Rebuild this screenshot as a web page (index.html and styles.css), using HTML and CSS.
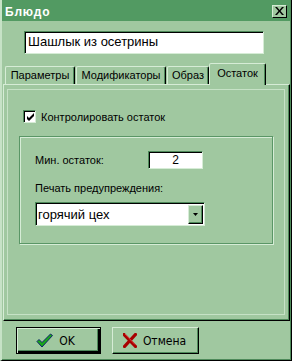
FILE: index.html
```html
<!DOCTYPE html>
<html lang="ru">
<head>
  <meta charset="UTF-8">
  <title>Блюдо</title>
  <link rel="stylesheet" href="styles.css">
</head>
<body>
  <div class="window">
    <div class="titlebar">
      <span class="title">Блюдо</span>
      <span class="close">
        <svg width="9" height="8" viewBox="0 0 9 8"><path d="M0 0h2l2.5 3 2.5-3h2l-3.5 4 3.5 4h-2l-2.5-3-2.5 3h-2l3.5-4z" fill="#000"/></svg>
      </span>
    </div>

    <div class="content">
      <div class="name-field">Шашлык из осетрины</div>

      <div class="tabs">
        <div class="tab tab-params">Параметры</div>
        <div class="tab tab-mods">Модификаторы</div>
        <div class="tab tab-image">Образ</div>
        <div class="tab tab-stock active">Остаток</div>
      </div>

      <div class="panel">
        <div class="page">
          <div class="check-row">
            <span class="checkbox">
              <svg width="9" height="9" viewBox="0 0 9 9"><path d="M1 3v3l2 2 5-5V0L3 5z" fill="#000"/></svg>
            </span>
            <span>Контролировать остаток</span>
          </div>

          <div class="group">
            <div class="field-row">
              <span class="field-label">Мин. остаток:</span>
              <span class="num-field">2</span>
            </div>
            <div class="field-label warn-label">Печать предупреждения:</div>
            <div class="combo">
              <span class="combo-text">горячий цех</span>
              <span class="combo-btn">
                <svg width="5" height="3" viewBox="0 0 5 3"><path d="M0 0h5L2.5 3z" fill="#000"/></svg>
              </span>
            </div>
          </div>
        </div>
      </div>

      <div class="buttons">
        <div class="btn btn-default">
          <svg width="17" height="15" viewBox="0 0 17 15"><path d="M1 8.5l2-2 3 3L14.5 1l2 1.5L6 14z" fill="#18a818" stroke="#102070" stroke-width="1" stroke-linejoin="round"/></svg>
          <span>OK</span>
        </div>
        <div class="btn btn-cancel">
          <svg width="14" height="15" viewBox="0 0 14 15"><path d="M1 1.5L12.5 13.5M12.5 1.5L1.5 13.5" stroke="#a80000" stroke-width="3.2" stroke-linecap="square"/><path d="M2 1L12 11.5" stroke="#e04040" stroke-width="1"/></svg>
          <span>Отмена</span>
        </div>
      </div>
    </div>
  </div>
</body>
</html>
```

FILE: styles.css
```css
body {
  margin: 0;
  font-family: 'Liberation Sans', Arial, sans-serif;
  font-size: 11px;
  color: #000;
  background: #a0c8a0;
}

/* Window frame */
.window {
  width: 292px;
  height: 361px;
  box-sizing: border-box;
  background: #a0c8a0;
  border-left: 2px solid #c6e2c6;
  border-right: 1px solid #000;
  border-bottom: 1px solid #000;
  box-shadow: inset -1px -1px 0 #4e8a5a;
}
.titlebar {
  height: 21px;
  margin-right: 1px;
  background: #529a62;
  display: flex;
  align-items: center;
  justify-content: space-between;
  padding: 0 3px 0 3px;
}
.title {
  color: #fff;
  font-weight: 700;
  font-size: 12px;
  letter-spacing: 0.8px;
  padding-top: 2px;
}
.close {
  width: 15px;
  height: 13px;
  box-sizing: border-box;
  background: #a0c8a0;
  border: 1px solid;
  border-color: #d6ecd6 #000 #000 #d6ecd6;
  display: flex;
  align-items: center;
  justify-content: center;
  margin-top: 1px;
}

.content {
  padding: 10px 0 0 1px;
}

/* Name edit */
.name-field {
  margin-left: 21px;
  width: 240px;
  height: 23px;
  box-sizing: border-box;
  background: #fff;
  border: 1px solid;
  border-color: #4e8a5a #d6ecd6 #d6ecd6 #4e8a5a;
  box-shadow: inset 1px 1px 0 #000;
  font-size: 13px;
  line-height: 20px;
  padding-left: 3px;
}

/* Tabs */
.tabs {
  display: flex;
  align-items: flex-end;
  height: 21px;
  margin-top: 9px;
  position: relative;
  z-index: 1;
}
.tab {
  height: 18px;
  box-sizing: border-box;
  border: 1px solid;
  border-bottom: none;
  border-color: #d6ecd6 #000 transparent #d6ecd6;
  box-shadow: inset -1px 0 0 #4e8a5a;
  border-radius: 2px 2px 0 0;
  text-align: center;
  line-height: 17px;
  white-space: nowrap;
}
.tab-params { margin-left: 2px; width: 70px; }
.tab-mods { margin-left: 1px; width: 90px; }
.tab-image { margin-left: 1px; width: 42px; }
.tab-stock { width: 57px; }
.tab.active {
  height: 22px;
  margin-bottom: -1px;
  background: #a0c8a0;
  line-height: 18px;
}

/* Tab panel */
.panel {
  width: 287px;
  height: 237px;
  box-sizing: border-box;
  border: 1px solid;
  border-color: #d6ecd6 #000 #000 #d6ecd6;
  box-shadow: inset -1px -1px 0 #4e8a5a;
  padding: 4px 0 0 3px;
}
.page {
  width: 278px;
  height: 226px;
  box-sizing: border-box;
  border: 1px solid #c6e2c6;
  padding: 20px 0 0 15px;
}

.check-row {
  display: flex;
  align-items: center;
  gap: 5px;
  height: 13px;
}
.checkbox {
  width: 13px;
  height: 13px;
  box-sizing: border-box;
  background: #fff;
  border: 1px solid;
  border-color: #4e8a5a #d6ecd6 #d6ecd6 #4e8a5a;
  box-shadow: inset 1px 1px 0 #000;
  display: flex;
  align-items: center;
  justify-content: center;
  padding: 1px 0 0 1px;
}

/* Group box */
.group {
  margin: 13px 0 0 -4px;
  width: 254px;
  box-sizing: border-box;
  border: 1px solid #5a9666;
  box-shadow: inset 1px 1px 0 #d6ecd6, 1px 1px 0 #d6ecd6;
  padding: 14px 0 17px 15px;
}
.field-row {
  display: flex;
  align-items: center;
  height: 18px;
}
.field-label { width: 113px; }
.num-field {
  width: 55px;
  height: 18px;
  box-sizing: border-box;
  background: #fff;
  border: 1px solid;
  border-color: #4e8a5a #d6ecd6 #d6ecd6 #4e8a5a;
  box-shadow: inset 1px 1px 0 #000;
  text-align: center;
  line-height: 16px;
  font-size: 12px;
}
.warn-label {
  width: auto;
  margin-top: 13px;
  line-height: 13px;
}
.combo {
  margin-top: 7px;
  width: 170px;
  height: 24px;
  box-sizing: border-box;
  background: #fff;
  border: 1px solid;
  border-color: #4e8a5a #d6ecd6 #d6ecd6 #4e8a5a;
  box-shadow: inset 1px 1px 0 #000;
  display: flex;
  align-items: center;
  justify-content: space-between;
  padding: 1px 1px 0 2px;
}
.combo-text {
  font-size: 13px;
}
.combo-btn {
  width: 15px;
  height: 19px;
  box-sizing: border-box;
  background: #a0c8a0;
  border: 1px solid;
  border-color: #d6ecd6 #000 #000 #d6ecd6;
  box-shadow: inset -1px -1px 0 #4e8a5a;
  display: flex;
  align-items: center;
  justify-content: center;
}

/* Dialog buttons */
.buttons {
  display: flex;
  gap: 11px;
  margin: 6px 0 0 13px;
}
.btn {
  height: 27px;
  box-sizing: border-box;
  display: flex;
  align-items: center;
  justify-content: center;
  gap: 6px;
  font-family: 'DejaVu Sans Condensed', 'DejaVu Sans', sans-serif;
  font-stretch: condensed;
  font-size: 12px;
}
.btn-default {
  width: 85px;
  border: 1px solid #000;
  box-shadow: inset 1px 1px 0 #d6ecd6, inset -2px -2px 0 #000, inset -3px -3px 0 #4e8a5a;
  padding-right: 6px;
}
.btn-cancel {
  width: 87px;
  border: 1px solid;
  border-color: #d6ecd6 #000 #000 #d6ecd6;
  box-shadow: inset -1px -1px 0 #4e8a5a;
  padding-right: 2px;
}
```
